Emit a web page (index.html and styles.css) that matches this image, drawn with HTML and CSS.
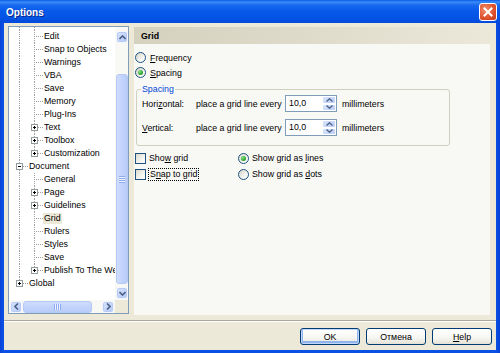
FILE: index.html
```html
<!DOCTYPE html>
<html>
<head>
<meta charset="utf-8">
<title>Options</title>
<link rel="stylesheet" href="styles.css">
</head>
<body>
<div class="window">
  <div class="titlebar">
    <span class="title">Options</span>
    <span class="close"><svg width="10" height="10" viewBox="0 0 10 10"><path d="M1.5 1.5 L8.5 8.5 M8.5 1.5 L1.5 8.5" stroke="#fff" stroke-width="2" stroke-linecap="square"/></svg></span>
  </div>
  <div class="client">
    <div class="main">
      <div class="tree">
        <div class="tree-view">
          <div class="row cut"><span class="g l0 v"></span><span class="g l1 v"></span></div>
          <div class="row"><span class="g l0 v"></span><span class="g l1 t"></span><span class="txt">Edit</span></div>
          <div class="row"><span class="g l0 v"></span><span class="g l1 t"></span><span class="txt">Snap to Objects</span></div>
          <div class="row"><span class="g l0 v"></span><span class="g l1 t"></span><span class="txt">Warnings</span></div>
          <div class="row"><span class="g l0 v"></span><span class="g l1 t"></span><span class="txt">VBA</span></div>
          <div class="row"><span class="g l0 v"></span><span class="g l1 t"></span><span class="txt">Save</span></div>
          <div class="row"><span class="g l0 v"></span><span class="g l1 t"></span><span class="txt">Memory</span></div>
          <div class="row"><span class="g l0 v"></span><span class="g l1 t"></span><span class="txt">Plug-Ins</span></div>
          <div class="row"><span class="g l0 v"></span><span class="g l1 t"><span class="box plus"></span></span><span class="txt">Text</span></div>
          <div class="row"><span class="g l0 v"></span><span class="g l1 t"><span class="box plus"></span></span><span class="txt">Toolbox</span></div>
          <div class="row"><span class="g l0 v"></span><span class="g l1 end"><span class="box plus"></span></span><span class="txt">Customization</span></div>
          <div class="row"><span class="g l0 t"><span class="box"></span></span><span class="txt">Document</span></div>
          <div class="row"><span class="g l0 v"></span><span class="g l1 t"></span><span class="txt">General</span></div>
          <div class="row"><span class="g l0 v"></span><span class="g l1 t"><span class="box plus"></span></span><span class="txt">Page</span></div>
          <div class="row"><span class="g l0 v"></span><span class="g l1 t"><span class="box plus"></span></span><span class="txt">Guidelines</span></div>
          <div class="row"><span class="g l0 v"></span><span class="g l1 t"></span><span class="txt sel">Grid</span></div>
          <div class="row"><span class="g l0 v"></span><span class="g l1 t"></span><span class="txt">Rulers</span></div>
          <div class="row"><span class="g l0 v"></span><span class="g l1 t"></span><span class="txt">Styles</span></div>
          <div class="row"><span class="g l0 v"></span><span class="g l1 t"></span><span class="txt">Save</span></div>
          <div class="row"><span class="g l0 v"></span><span class="g l1 end"><span class="box plus"></span></span><span class="txt">Publish To The Web</span></div>
          <div class="row"><span class="g l0 end"><span class="box plus"></span></span><span class="txt">Global</span></div>
        </div>
        <div class="vscroll">
          <div class="sb-btn"><svg width="7" height="5" viewBox="0 0 7 5"><path d="M0.5 4 L3.5 1 L6.5 4" fill="none" stroke="#4d6185" stroke-width="1.6"/></svg></div>
          <div class="vtrack"><div class="vthumb"><span class="grip-v"></span></div></div>
          <div class="sb-btn"><svg width="7" height="5" viewBox="0 0 7 5"><path d="M0.5 1 L3.5 4 L6.5 1" fill="none" stroke="#4d6185" stroke-width="1.6"/></svg></div>
        </div>
        <div class="hscroll">
          <div class="sb-btn"><svg width="5" height="7" viewBox="0 0 5 7"><path d="M4 0.5 L1 3.5 L4 6.5" fill="none" stroke="#4d6185" stroke-width="1.6"/></svg></div>
          <div class="htrack"><div class="hthumb"><span class="grip-h"></span></div></div>
          <div class="sb-btn"><svg width="5" height="7" viewBox="0 0 5 7"><path d="M1 0.5 L4 3.5 L1 6.5" fill="none" stroke="#4d6185" stroke-width="1.6"/></svg></div>
        </div>
        <div class="corner"></div>
      </div>
      <div class="panel">
        <div class="panel-head">Grid</div>
        <div class="panel-body">
          <div class="opt"><span class="radio"></span><span><u>F</u>requency</span></div>
          <div class="opt"><span class="radio on"></span><span><u>S</u>pacing</span></div>
          <fieldset class="group">
            <legend>Spacing</legend>
            <div class="frow">
              <span class="lbl">Hori<u>z</u>ontal:</span>
              <span>place a grid line every</span>
              <span class="spin"><span class="val">10,0</span><span class="arrows"><span class="sa"><svg width="7" height="4" viewBox="0 0 7 4"><path d="M0.5 3.5 L3.5 0.8 L6.5 3.5" fill="none" stroke="#4d6185" stroke-width="1.3"/></svg></span><span class="sa"><svg width="7" height="4" viewBox="0 0 7 4"><path d="M0.5 0.5 L3.5 3.2 L6.5 0.5" fill="none" stroke="#4d6185" stroke-width="1.3"/></svg></span></span></span>
              <span class="unit">millimeters</span>
            </div>
            <div class="frow second">
              <span class="lbl"><u>V</u>ertical:</span>
              <span>place a grid line every</span>
              <span class="spin"><span class="val">10,0</span><span class="arrows"><span class="sa"><svg width="7" height="4" viewBox="0 0 7 4"><path d="M0.5 3.5 L3.5 0.8 L6.5 3.5" fill="none" stroke="#4d6185" stroke-width="1.3"/></svg></span><span class="sa"><svg width="7" height="4" viewBox="0 0 7 4"><path d="M0.5 0.5 L3.5 3.2 L6.5 0.5" fill="none" stroke="#4d6185" stroke-width="1.3"/></svg></span></span></span>
              <span class="unit">millimeters</span>
            </div>
          </fieldset>
          <div class="checks">
            <div class="opt chk"><span class="checkbox"></span><span>Sho<u>w</u> grid</span></div>
            <div class="opt chk"><span class="radio on"></span><span>Show grid as <u>l</u>ines</span></div>
            <div class="opt chk"><span class="checkbox"></span><span class="focus">S<u>n</u>ap to grid</span></div>
            <div class="opt chk"><span class="radio"></span><span>Show grid as <u>d</u>ots</span></div>
          </div>
        </div>
      </div>
    </div>
    <div class="sep"></div>
    <div class="buttons">
      <span class="btn default">OK</span>
      <span class="btn">Отмена</span>
      <span class="btn"><span><u>H</u>elp</span></span>
    </div>
  </div>
</div>
</body>
</html>
```

FILE: styles.css
```css
* { box-sizing: border-box; }
html, body { margin: 0; padding: 0; }
body {
  width: 500px;
  height: 353px;
  overflow: hidden;
  font-family: "Liberation Sans", Arial, sans-serif;
  font-size: 8.8px;
  color: #000;
  background: #fff;
}
u { text-decoration: underline; text-underline-offset: 1px; }

.window {
  width: 500px;
  height: 353px;
  display: flex;
  flex-direction: column;
  background: linear-gradient(to right, #0842d8 0, #0b50e4 3px, #0b50e4 496px, #0641d6 100%);
}

.titlebar {
  height: 23px;
  flex: none;
  display: flex;
  align-items: center;
  justify-content: space-between;
  padding: 0 3px 0 6px;
  background: linear-gradient(to bottom, #0a5ce8 0, #3b8cf6 2px, #1a6af0 5px, #0659ea 11px, #0454e4 18px, #0449da 23px);
}
.title {
  color: #fff;
  font-weight: bold;
  font-size: 10px;
  text-shadow: 1px 1px 0 #0b2a8a;
  padding-top: 1px;
}
.close {
  width: 18px;
  height: 18px;
  margin-top: 1px;
  border: 1px solid #fff;
  border-radius: 3px;
  background: radial-gradient(circle at 35% 35%, #f0906e 0, #e0542f 55%, #c43a17 100%);
  display: flex;
  align-items: center;
  justify-content: center;
}

.client {
  flex: 1;
  margin: 0 4px 3px;
  background: #ece9d8;
  padding: 3px 6px 0 4px;
  display: flex;
  flex-direction: column;
}

.main {
  height: 289px;
  flex: none;
  display: flex;
  align-items: flex-start;
  gap: 5px;
}

/* Tree */
.tree {
  width: 121px;
  height: 288px;
  border: 1px solid #7f9db9;
  background: #fff;
  display: grid;
  grid-template-columns: 106px 13px;
  grid-template-rows: 1fr 13px;
}
.tree-view {
  overflow: hidden;
  padding: 0 0 0 3px;
}
.row {
  height: 13px;
  display: flex;
  align-items: center;
  white-space: nowrap;
}
.row.cut { margin-top: -10px; }
.g {
  flex: none;
  height: 13px;
  display: flex;
  align-items: center;
  background-repeat: no-repeat;
}
.l0 { width: 16px; --x: 7px; }
.l1 { width: 15px; --x: 6px; }
.v {
  background-image: repeating-linear-gradient(to bottom, #a0a0a0 0 1px, transparent 1px 2px);
  background-position: var(--x) 0;
  background-size: 1px 100%;
}
.t {
  background-image: repeating-linear-gradient(to bottom, #a0a0a0 0 1px, transparent 1px 2px),
                    repeating-linear-gradient(to right, #a0a0a0 0 1px, transparent 1px 2px);
  background-position: var(--x) 0, var(--x) 6px;
  background-size: 1px 100%, calc(100% - var(--x)) 1px;
}
.end {
  background-image: repeating-linear-gradient(to bottom, #a0a0a0 0 1px, transparent 1px 2px),
                    repeating-linear-gradient(to right, #a0a0a0 0 1px, transparent 1px 2px);
  background-position: var(--x) 0, var(--x) 6px;
  background-size: 1px 7px, calc(100% - var(--x)) 1px;
}
.box {
  width: 7px;
  height: 7px;
  margin-left: calc(var(--x) - 3px);
  border: 1px solid #919b9c;
  background: linear-gradient(#000, #000) center / 3px 1px no-repeat, #fff;
}
.box.plus {
  background: linear-gradient(#000, #000) center / 3px 1px no-repeat,
              linear-gradient(#000, #000) center / 1px 3px no-repeat, #fff;
}
.txt {
  padding: 0 1px;
  line-height: 11px;
}
.txt.sel { background: #ece9d8; }

/* Scrollbars */
.sb-btn {
  flex: none;
  width: 12px;
  height: 12px;
  margin: 0 0 0 1px;
  border: 1px solid #f4f6fd;
  border-radius: 3px;
  background: linear-gradient(135deg, #d8e4fe 0, #c2d4fb 60%, #b3c8f6 100%);
  box-shadow: inset 0 0 0 1px #b9cbf5;
  display: flex;
  align-items: center;
  justify-content: center;
}
.vscroll {
  grid-column: 2;
  grid-row: 1;
  display: flex;
  flex-direction: column;
  padding: 4px 0 1px;
  background: #f8f8f4;
}
.vtrack {
  flex: 1;
  padding-top: 31px;
}
.vthumb {
  height: 210px;
  margin-left: 1px;
  width: 12px;
  border: 1px solid #b6c9f4;
  border-radius: 3px;
  background: linear-gradient(to right, #cfdcfd, #c0d2fb 60%, #b8ccf8);
  display: flex;
  align-items: center;
  justify-content: center;
}
.grip-v {
  width: 6px;
  height: 7px;
  background: repeating-linear-gradient(to bottom, #8eaaee 0 1px, #eef3fe 1px 2px);
}
.hscroll {
  grid-column: 1;
  grid-row: 2;
  display: flex;
  align-items: center;
  padding-right: 1px;
  background: #f8f8f4;
}
.hscroll .sb-btn { width: 12px; height: 12px; }
.htrack {
  flex: 1;
  padding-left: 1px;
}
.hthumb {
  width: 69px;
  height: 12px;
  border: 1px solid #b6c9f4;
  border-radius: 3px;
  background: linear-gradient(to bottom, #cfdcfd, #c0d2fb 60%, #b8ccf8);
  display: flex;
  align-items: center;
  justify-content: center;
}
.grip-h {
  width: 7px;
  height: 6px;
  background: repeating-linear-gradient(to right, #8eaaee 0 1px, #eef3fe 1px 2px);
}
.corner {
  grid-column: 2;
  grid-row: 2;
  background: #ece9d8;
}

/* Panel */
.panel {
  width: 356px;
  height: 288px;
  margin-top: 1px;
  display: flex;
  flex-direction: column;
}
.panel-head {
  height: 17px;
  flex: none;
  display: flex;
  align-items: center;
  padding-left: 7px;
  font-weight: bold;
  background: linear-gradient(to right, #d5d1bf 0, #dedac9 45%, #ebe8da 100%);
}
.panel-body {
  flex: 1;
  background: #f8f8f5;
  padding: 6px 0 0 1px;
}
.opt {
  height: 15px;
  display: flex;
  align-items: center;
  gap: 4px;
  white-space: nowrap;
}
.radio {
  flex: none;
  width: 11px;
  height: 11px;
  border: 1px solid #1c5180;
  border-radius: 50%;
  background: linear-gradient(135deg, #d6d3c6 0, #f4f4f0 60%, #fff 100%);
  display: flex;
  align-items: center;
  justify-content: center;
}
.radio.on::after {
  content: "";
  width: 5px;
  height: 5px;
  border-radius: 50%;
  background: radial-gradient(circle at 35% 35%, #8ae28a 0, #2ca52c 60%, #1b8a1b 100%);
}
.checkbox {
  flex: none;
  width: 11px;
  height: 11px;
  border: 1px solid #1c5180;
  background: linear-gradient(135deg, #dcd9cb 0, #f4f4f0 60%, #fff 100%);
}

.group {
  margin: 4px 0 0 1px;
  width: 314px;
  min-width: 0;
  padding: 0 0 9px 4px;
  border: 1px solid #d0d0bf;
  border-radius: 3px;
}
.group legend {
  padding: 0 1px;
  line-height: 11px;
  color: #0046d5;
}
.frow {
  display: grid;
  grid-template-columns: 55px 89px 52px auto;
  align-items: center;
  height: 17px;
  white-space: nowrap;
}
.frow.second { margin-top: 7px; }
.lbl { padding-left: 1px; }
.unit { margin-left: 5px; }
.spin {
  height: 17px;
  display: flex;
  border: 1px solid #7f9db9;
  background: #fff;
}
.val {
  flex: 1;
  padding-left: 3px;
  line-height: 14px;
}
.arrows {
  width: 14px;
  display: flex;
  flex-direction: column;
}
.sa {
  flex: 1;
  border: 1px solid #fff;
  border-radius: 2px;
  background: linear-gradient(135deg, #d8e4fe, #bccff8);
  display: flex;
  align-items: center;
  justify-content: center;
}

.checks {
  margin-top: 4px;
  display: grid;
  grid-template-columns: 103px 1fr;
}
.opt.chk { height: 16px; gap: 3px; }
.focus {
  outline: 1px dotted #000;
  padding: 0 1px;
  line-height: 11px;
}

/* Footer */
.sep {
  flex: none;
  height: 2px;
  margin: 5px -6px 0 -4px;
  border-top: 1px solid #aca899;
  border-bottom: 1px solid #fff;
}
.buttons {
  flex: none;
  margin: 6px -2px 0 0;
  display: flex;
  justify-content: flex-end;
  gap: 6px;
}
.btn {
  width: 60px;
  height: 17px;
  border: 1px solid #003c74;
  border-radius: 3px;
  background: linear-gradient(to bottom, #ffffff 0, #f6f6f2 60%, #e4e1d6 100%);
  display: flex;
  align-items: center;
  justify-content: center;
}
.btn.default {
  box-shadow: inset 0 0 0 1px #c3d6f8, inset 0 -1px 0 2px #90b4ee;
}
```
